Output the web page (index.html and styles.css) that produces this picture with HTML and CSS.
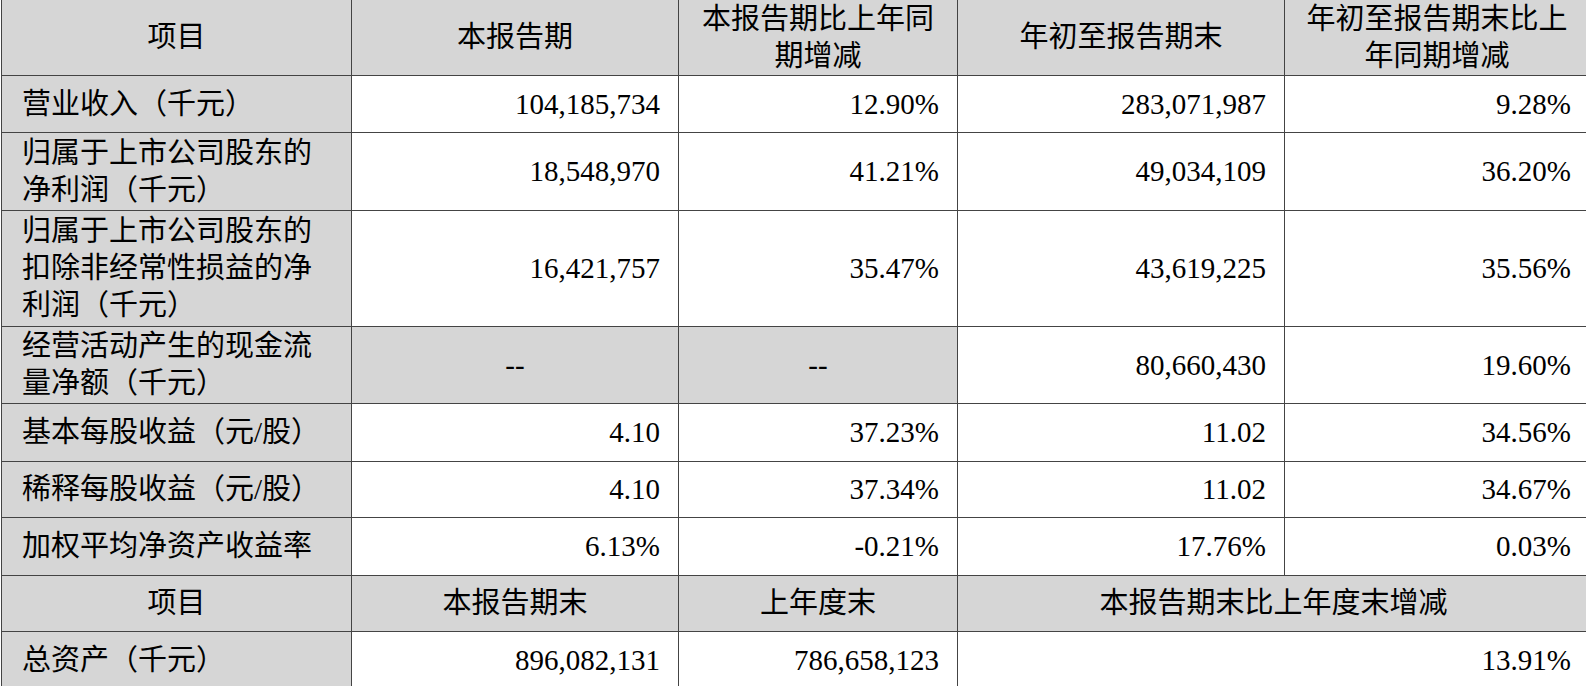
FILE: index.html
```html
<!DOCTYPE html>
<html lang="zh-CN">
<head>
<meta charset="utf-8">
<title>主要财务数据</title>
<link rel="stylesheet" href="styles.css">
</head>
<body>
<div class="wrap">
<table class="fin">
  <colgroup>
    <col class="c1"><col class="c2"><col class="c3"><col class="c4"><col class="c5">
  </colgroup>
  <tr class="h-head">
    <th>项目</th>
    <th>本报告期</th>
    <th>本报告期比上年同<br>期增减</th>
    <th>年初至报告期末</th>
    <th>年初至报告期末比上<br>年同期增减</th>
  </tr>
  <tr class="h-57">
    <td class="lbl">营业收入（千元）</td>
    <td>104,185,734</td>
    <td>12.90%</td>
    <td>283,071,987</td>
    <td>9.28%</td>
  </tr>
  <tr class="h-78">
    <td class="lbl">归属于上市公司股东的<br>净利润（千元）</td>
    <td>18,548,970</td>
    <td>41.21%</td>
    <td>49,034,109</td>
    <td>36.20%</td>
  </tr>
  <tr class="h-116">
    <td class="lbl">归属于上市公司股东的<br>扣除非经常性损益的净<br>利润（千元）</td>
    <td>16,421,757</td>
    <td>35.47%</td>
    <td>43,619,225</td>
    <td>35.56%</td>
  </tr>
  <tr class="h-77">
    <td class="lbl">经营活动产生的现金流<br>量净额（千元）</td>
    <td class="na">--</td>
    <td class="na">--</td>
    <td>80,660,430</td>
    <td>19.60%</td>
  </tr>
  <tr class="h-58">
    <td class="lbl">基本每股收益（元/股）</td>
    <td>4.10</td>
    <td>37.23%</td>
    <td>11.02</td>
    <td>34.56%</td>
  </tr>
  <tr class="h-56">
    <td class="lbl">稀释每股收益（元/股）</td>
    <td>4.10</td>
    <td>37.34%</td>
    <td>11.02</td>
    <td>34.67%</td>
  </tr>
  <tr class="h-58">
    <td class="lbl">加权平均净资产收益率</td>
    <td>6.13%</td>
    <td>-0.21%</td>
    <td>17.76%</td>
    <td>0.03%</td>
  </tr>
  <tr class="h-56">
    <th>项目</th>
    <th>本报告期末</th>
    <th>上年度末</th>
    <th colspan="2">本报告期末比上年度末增减</th>
  </tr>
  <tr class="h-57">
    <td class="lbl">总资产（千元）</td>
    <td>896,082,131</td>
    <td>786,658,123</td>
    <td colspan="2">13.91%</td>
  </tr>
</table>
</div>
</body>
</html>
```
FILE: styles.css
```css
html, body {
  margin: 0;
  padding: 0;
  background: #ffffff;
  overflow: hidden;
}

.wrap {
  padding-left: 1px;
  margin-top: -1px;
}

.fin {
  border-collapse: collapse;
  table-layout: fixed;
  width: 1588px;
  font-family: "Liberation Serif", "Noto Sans CJK SC", serif;
  font-size: 29px;
  line-height: 37px;
  color: #000;
}

.c1 { width: 350px; }
.c2 { width: 327px; }
.c3 { width: 279px; }
.c4 { width: 327px; }
.c5 { width: 305px; }

.fin th,
.fin td {
  border: 1px solid #444;
  padding: 0 18px 0 20px;
  vertical-align: middle;
  white-space: nowrap;
}

.fin th {
  background: #d6d6d6;
  font-weight: normal;
  text-align: center;
  padding: 0 4px;
}

.fin td {
  text-align: right;
}

.fin td.lbl {
  background: #d6d6d6;
  text-align: left;
}

.fin td.na {
  background: #d6d6d6;
  text-align: center;
  padding: 0;
}

.h-head { height: 76px; }
.h-57 { height: 57px; }
.h-78 { height: 78px; }
.h-116 { height: 116px; }
.h-77 { height: 77px; }
.h-58 { height: 58px; }
.h-56 { height: 56px; }
```
